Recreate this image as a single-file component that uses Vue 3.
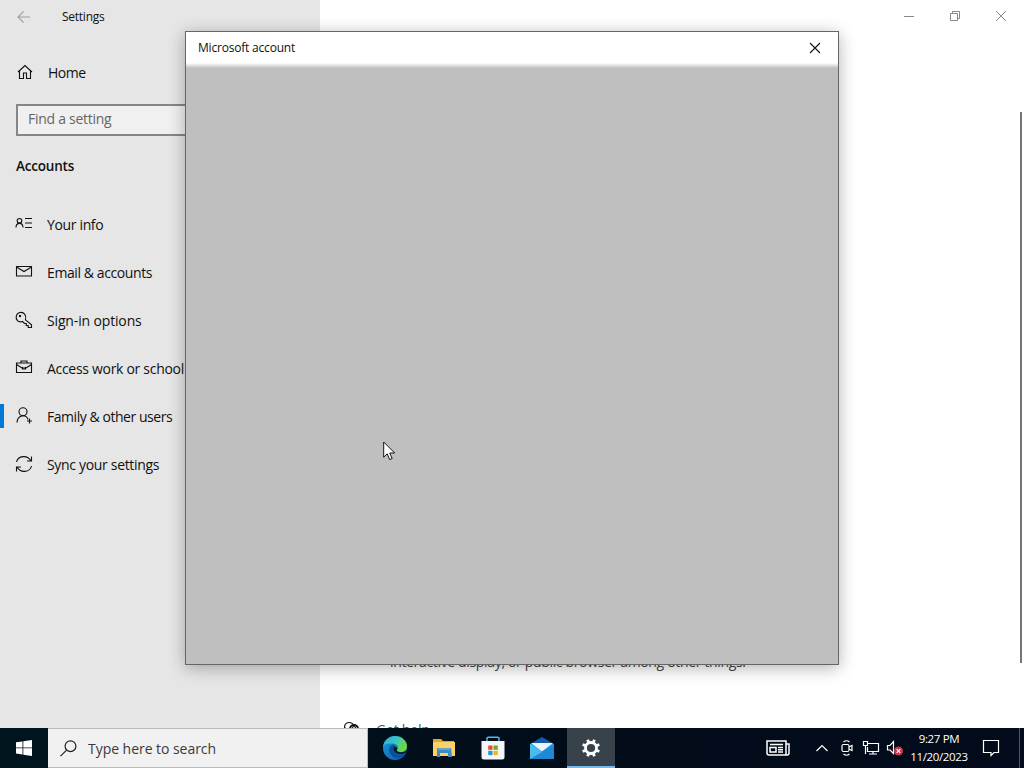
<template>
  <div class="desktop">
    <main class="settings">
      <aside class="sidebar">
        <header class="app-title">
          <svg class="back" viewBox="0 0 14 12"><path d="M13 6H1M6.500.500L1 6l5.500 5.500" /></svg>
          <span>Settings</span>
        </header>
        <div class="home">
          <svg viewBox="0 0 16 16"><path d="M1 8L8 1.5 15 8M2.5 6.8v7.7h4V9h3v5.5h4V6.8" /></svg>
          <span>Home</span>
        </div>
        <div class="find">Find a setting</div>
        <h2>Accounts</h2>
        <nav>
          <div v-for="item in items" :key="item.label" class="nav-item" :class="{ active: item.active }">
            <svg viewBox="0 0 18 18"><path v-for="d in item.paths" :key="d" :d="d" /></svg>
            <span :style="{ letterSpacing: item.tracking + 'px' }">{{ item.label }}</span>
          </div>
        </nav>
      </aside>
      <section class="content">
        <div class="window-buttons">
          <svg viewBox="0 0 10 10"><path d="M0 5.5h10" /></svg>
          <svg viewBox="0 0 10 10"><path d="M.5 2.5h7v7h-7zM2.5 2.5v-2h7v7h-2" /></svg>
          <svg viewBox="0 0 10 10"><path d="M0 0l10 10M10 0L0 10" /></svg>
        </div>
        <p class="kiosk">interactive display, or public browser among other things.</p>
        <div class="help">
          <svg viewBox="0 0 18 16">
            <path d="M3 9C0 6 2 1.5 6 1.5c2 0 3.5.7 4.5 2" />
            <circle cx="11" cy="8" r="4" class="thick" />
            <path d="M9.5 7c0-2 3-2 3 0 0 1-1.5 1-1.5 2.5" />
          </svg>
          <a>Get help</a>
        </div>
        <div class="scrollbar"></div>
      </section>
    </main>

    <div class="dialog">
      <header class="dialog-title">
        <span>Microsoft account</span>
        <svg viewBox="0 0 10 10"><path d="M0 0l10 10M10 0L0 10" /></svg>
      </header>
      <div class="dialog-body"></div>
    </div>

    <svg class="cursor" viewBox="0 0 13 20">
      <path d="M.7 1v15.2l3.5-3.4 2.5 5.8 2.5-1.1-2.5-5.5h5z" />
    </svg>

    <footer class="taskbar">
      <div class="start">
        <svg viewBox="0 0 16 16"><path d="M0 2.3l6.5-.9v6.1H0zM7.3 1.2L16 0v7.5H7.3zM0 8.3h6.5v6.2L0 13.6zM7.3 8.3H16V16l-8.7-1.3z" /></svg>
      </div>
      <div class="search">
        <svg viewBox="0 0 17 17"><circle cx="10.5" cy="6.2" r="5.4" /><path d="M6.6 10.1L.5 16.2" /></svg>
        <span>Type here to search</span>
      </div>
      <div class="apps">
        <div class="app">
          <svg class="edge" viewBox="0 0 24 24">
            <defs>
              <linearGradient id="edge-top" x1="0" y1="0" x2="1" y2=".5">
                <stop offset="0" stop-color="#2aa9e0" />
                <stop offset=".5" stop-color="#36c5c8" />
                <stop offset="1" stop-color="#70d83f" />
              </linearGradient>
              <linearGradient id="edge-low" x1="0" y1="0" x2="1" y2="1">
                <stop offset="0" stop-color="#1996dc" />
                <stop offset="1" stop-color="#0c5cae" />
              </linearGradient>
            </defs>
            <circle cx="12" cy="12" r="12" fill="url(#edge-low)" />
            <path d="M0 11C1 4 6 0 12 0c7 0 12 5 12 10 0 4-3 6-6 6-3 0-4.500-1-4-2 2-2 1-6-4-6.500C6 7 1 8 0 11z" fill="url(#edge-top)" />
            <path d="M9 9c-5 3-3 11 4 13 3 .8 7-1 9-4-5 2.500-11 0-11.500-4C10.300 12 11 11 12 10.500 11.500 9 10 8.500 9 9z" fill="#0b4f98" />
            <path d="M11.700 10.500c-2 1.500-1.500 5 1.300 6.500 3.500 2 7 1.500 10-.5l1-2.500c-2 2-5 2.500-8 2-2-.4-2.600-1.300-2-2.200.7-1 .3-3-2.300-3.300z" fill="#071c2b" />
          </svg>
        </div>
        <div class="app">
          <svg class="folder" viewBox="0 0 22 20">
            <path d="M0 1h8l2 2h11v4H0z" fill="#e3a52c" />
            <path d="M0 4h22v14H0z" fill="#fbd265" />
            <path d="M4 10h14l1 9h-4v-4H7v4H4z" fill="#428ac0" />
            <path d="M5 10h12v2H5z" fill="#64a6d1" />
          </svg>
        </div>
        <div class="app">
          <svg class="store" viewBox="0 0 24 24">
            <path d="M6 6V2.500Q6 1.200 7.300 1.200h9.400Q18 1.200 18 2.500V6" fill="none" stroke="#61b4e8" stroke-width="1.600" />
            <path d="M.500 5h23v16q0 2.500-2.500 2.500H3Q.500 23.500.500 21z" fill="#f4f5f6" />
            <path d="M6 5V3M18 5V3" fill="none" stroke="#2b7cc0" stroke-width="1.600" />
            <path d="M7.200 9.500h4.300v4.300H7.200z" fill="#e84e2c" />
            <path d="M12.500 9.500h4.300v4.300h-4.300z" fill="#76aa22" />
            <path d="M7.200 14.800h4.300v4.300H7.200z" fill="#2495d6" />
            <path d="M12.500 14.800h4.300v4.300h-4.300z" fill="#f1b521" />
          </svg>
        </div>
        <div class="app">
          <svg class="mail" viewBox="0 0 24 22">
            <path d="M0 7L12 0l12 7v5H0z" fill="#1558ae" />
            <path d="M0 7h24v15H0z" fill="#2ca6e8" />
            <path d="M1 6h22L12 14.500z" fill="#e9f4fb" />
            <path d="M0 22L24 7v15z" fill="#2188d5" />
            <path d="M0 7l12 8L0 22z" fill="#48bced" />
          </svg>
        </div>
        <div class="app open">
          <svg class="gear" viewBox="0 0 20 20">
            <circle cx="10" cy="10" r="5.500" />
            <path v-for="n in 8" :key="n" d="M10 1v4" :transform="`rotate(${n * 45 + 22.5} 10 10)`" />
          </svg>
        </div>
      </div>
      <div class="tray">
        <svg class="news" viewBox="0 0 24 16"><path d="M1 1h19v14H3q-2 0-2-2zM20 4h3v9q0 2-2 2h-2M4 4.500h13M4 7.500h6v4.500H4zM12 7.500h5M12 9.700h5M12 12h5" /></svg>
        <svg class="chevron" viewBox="0 0 12 8"><path d="M.5 7L6 1.500 11.500 7" /></svg>
        <svg class="meet" viewBox="0 0 12 16"><path d="M2.500 2Q5.500-.5 8.500 2M2.500 14q3 2.500 6 0M2.500 4.500h4q1.500 0 1.500 1.500v4q0 1.500-1.500 1.500h-4Q1 11.500 1 10V6q0-1.500 1.500-1.500zM8 7l3-1.500v5L8 9" /></svg>
        <svg class="network" viewBox="0 0 16 14"><path d="M5 2.500h10.500v8H4.500V6M.5.500h4v4h-4zM2.500 4.500v8.500M6 13h8M10 10.500V13" /></svg>
        <svg class="volume" viewBox="0 0 16 16">
          <path d="M.5 5.500H3l3.500-4v12L3 10H.5z" />
          <circle cx="11.500" cy="11" r="4.500" />
          <path d="M9.700 9.200l3.600 3.600M13.300 9.200l-3.600 3.600" />
        </svg>
        <div class="clock"><span>9:27 PM</span><span class="date">11/20/2023</span></div>
        <svg class="notify" viewBox="0 0 16 16"><path d="M.5.500h15v12H11L8 15.500V12.500H.500z" /></svg>
        <div class="show-desktop"></div>
      </div>
    </footer>
  </div>
</template>

<script setup>
const items = [
  {
    label: 'Your info',
    tracking: -0.35,
    paths: ['M4.500 3.500a2.300 2.300 0 1 1 0 4.600a2.300 2.300 0 1 1 0-4.600z', 'M1 12.500C1 7 8 7 8 12.500', 'M10 3.500h7M10 8h7M10 12.500h7']
  },
  {
    label: 'Email & accounts',
    tracking: -0.4,
    paths: ['M1.500 3.500h15v9.500h-15z', 'M1.500 4L9 8.500 16.500 4']
  },
  {
    label: 'Sign-in options',
    tracking: -0.15,
    paths: ['M10.500 8.800l6 5V16.500h-3.300v-2h-2v-2H9.500L7.500 10.500C3 12 .500 8.500 1.300 5 2.200 1 7.500.300 9.700 3.200c1.300 1.600 1.300 3.800.8 5.600z', 'M4.500 4.500h1v1h-1z']
  },
  {
    label: 'Access work or school',
    tracking: -0.3,
    paths: ['M1.500 4h15v9.500h-15z', 'M6 4V2h6v2', 'M1.500 5.500L7 9h4l5.500-3.500', 'M7.500 8v2h3V8']
  },
  {
    label: 'Family & other users',
    tracking: -0.45,
    active: true,
    paths: ['M8 .8a4 4 0 1 1 0 8a4 4 0 1 1 0-8z', 'M2 15.500c.5-8 9-8.500 11-3', 'M14.500 11.500v5M12 14h5']
  },
  {
    label: 'Sync your settings',
    tracking: -0.32,
    paths: ['M1.500 7C3 .5 12.500-.5 16 6M16.500 1.500v4.500H12', 'M16.500 11C15 17.500 5.500 18.500 2 12M1.500 16.500V12H6']
  }
]
</script>

<style>
body {
  margin: 0;
  overflow: hidden;
}
</style>

<style scoped>
.desktop {
  position: relative;
  display: flex;
  flex-direction: column;
  width: 1024px;
  height: 768px;
  overflow: hidden;
  font-family: "Open Sans", "Noto Sans", sans-serif;
  font-size: 14px;
  letter-spacing: -0.2px;
  color: #111;
}

* {
  box-sizing: border-box;
}

svg {
  display: block;
  flex: none;
  overflow: visible;
}

.settings {
  display: flex;
  height: 728px;
}

.settings svg,
.dialog svg {
  fill: none;
  stroke: #111;
  stroke-width: 1.1;
}

.sidebar {
  width: 320px;
  background: #e6e6e6;
}

.app-title {
  display: flex;
  align-items: center;
  gap: 31px;
  height: 33px;
  padding-left: 17px;
  font-size: 12px;
  letter-spacing: -0.25px;
}

.settings .back {
  width: 14px;
  height: 12px;
  stroke: #a0a0a0;
}

.home {
  display: flex;
  align-items: center;
  gap: 15px;
  height: 48px;
  margin-top: 15px;
  margin-bottom: 8px;
  padding-left: 17px;
  letter-spacing: -0.5px;
}

.home svg {
  width: 16px;
  height: 16px;
}

.find {
  display: flex;
  align-items: center;
  width: 288px;
  height: 32px;
  margin-left: 16px;
  padding: 0 10px 3px;
  border: 2px solid #868686;
  background: #f0f0f0;
  color: #666;
  letter-spacing: -0.28px;
}

h2 {
  height: 30px;
  margin: 15px 0 19px 16px;
  font-size: 13.5px;
  font-weight: 600;
  line-height: 31px;
}

.nav-item {
  display: flex;
  align-items: center;
  gap: 14px;
  height: 48px;
  padding-left: 15px;
  white-space: nowrap;
}

.nav-item svg {
  width: 18px;
  height: 18px;
}

.nav-item.active {
  background: linear-gradient(#0078d7, #0078d7) 0 12px / 4px 24px no-repeat;
}

.content {
  position: relative;
  display: flex;
  flex-direction: column;
  flex: 1;
  background: #fff;
}

.window-buttons {
  display: flex;
  justify-content: flex-end;
  gap: 36px;
  padding: 11px 18px 0;
}

.window-buttons svg {
  width: 10px;
  height: 10px;
  stroke: #888;
  stroke-width: 1;
}

.kiosk {
  height: 20px;
  margin: auto 0 0 70px;
  color: #444;
  line-height: 20px;
  letter-spacing: -0.34px;
}

.help {
  display: flex;
  align-items: center;
  gap: 15px;
  height: 20px;
  margin: 47px 0 -11px 23px;
}

.help svg {
  width: 18px;
  height: 16px;
}

.help .thick {
  stroke-width: 2;
}

.help a {
  color: #245c84;
}

.scrollbar {
  position: absolute;
  top: 112px;
  right: 2px;
  width: 2px;
  height: 551px;
  background: #757575;
}

.dialog {
  position: absolute;
  top: 31px;
  left: 185px;
  display: flex;
  flex-direction: column;
  width: 654px;
  height: 634px;
  border: 1px solid #666;
  background: #bfbfbf;
  box-shadow: 0 3px 16px rgba(0, 0, 0, 0.3);
}

.dialog-title {
  display: flex;
  align-items: center;
  justify-content: space-between;
  height: 31px;
  padding: 1px 18px 0 12px;
  background: #fff;
  font-size: 12px;
  letter-spacing: -0.2px;
}

.dialog-title span {
  padding-bottom: 1px;
}

.dialog-title svg {
  width: 10px;
  height: 10px;
}

.dialog-body {
  flex: 1;
  background: linear-gradient(#fff, #bfbfbf 5px);
}

.cursor {
  position: absolute;
  top: 441px;
  left: 383px;
  width: 13px;
  height: 20px;
  fill: #fff;
  stroke: #111;
  stroke-width: 1;
}

.taskbar {
  position: relative;
  display: flex;
  height: 40px;
  background: linear-gradient(90deg, #00151f, #020c19 60%, #030b1c);
  color: #fff;
}

.start {
  display: flex;
  align-items: center;
  justify-content: center;
  width: 48px;
}

.start svg {
  width: 16px;
  height: 16px;
  fill: #fff;
}

.search {
  display: flex;
  align-items: center;
  gap: 11px;
  width: 320px;
  padding-left: 12px;
  border: 1px solid #bbb;
  border-left: 0;
  background: #f1f1f1;
  color: #3a3a3a;
  letter-spacing: -0.04px;
}

.search svg {
  width: 17px;
  height: 17px;
  fill: none;
  stroke: #222;
  stroke-width: 1.2;
}

.apps {
  display: flex;
  gap: 1px;
  padding-left: 3px;
}

.app {
  display: flex;
  align-items: center;
  justify-content: center;
  width: 48px;
}

.app.open {
  border-bottom: 2px solid #76b9ed;
  background: #37424b;
}

.edge,
.store {
  width: 24px;
  height: 24px;
}

.folder {
  width: 22px;
  height: 20px;
}

.mail {
  width: 24px;
  height: 22px;
}

.gear {
  width: 20px;
  height: 20px;
  margin-top: 2px;
  fill: none;
  stroke: #fff;
  stroke-width: 2.8;
}

.tray {
  display: flex;
  align-items: center;
  margin-left: auto;
}

.tray svg {
  fill: none;
  stroke: #fff;
  stroke-width: 1.2;
}

.tray .news {
  width: 24px;
  height: 16px;
  margin-right: 26px;
  stroke-width: 1.5;
}

.tray .chevron {
  width: 12px;
  height: 8px;
  margin-right: 13px;
}

.tray .meet {
  width: 12px;
  height: 16px;
  margin-right: 10px;
}

.tray .network {
  width: 16px;
  height: 14px;
  margin-right: 8px;
}

.tray .volume {
  width: 16px;
  height: 16px;
}

.tray .volume circle {
  fill: #cf3545;
  stroke: none;
}

.clock {
  display: flex;
  flex-direction: column;
  align-items: center;
  width: 72px;
  font-size: 11.5px;
  line-height: 18px;
  letter-spacing: -0.35px;
}

.tray .notify {
  width: 16px;
  height: 16px;
  margin: 0 20px 0 8px;
}

.show-desktop {
  width: 5px;
  height: 40px;
  border-left: 1px solid #4d5564;
}
</style>
